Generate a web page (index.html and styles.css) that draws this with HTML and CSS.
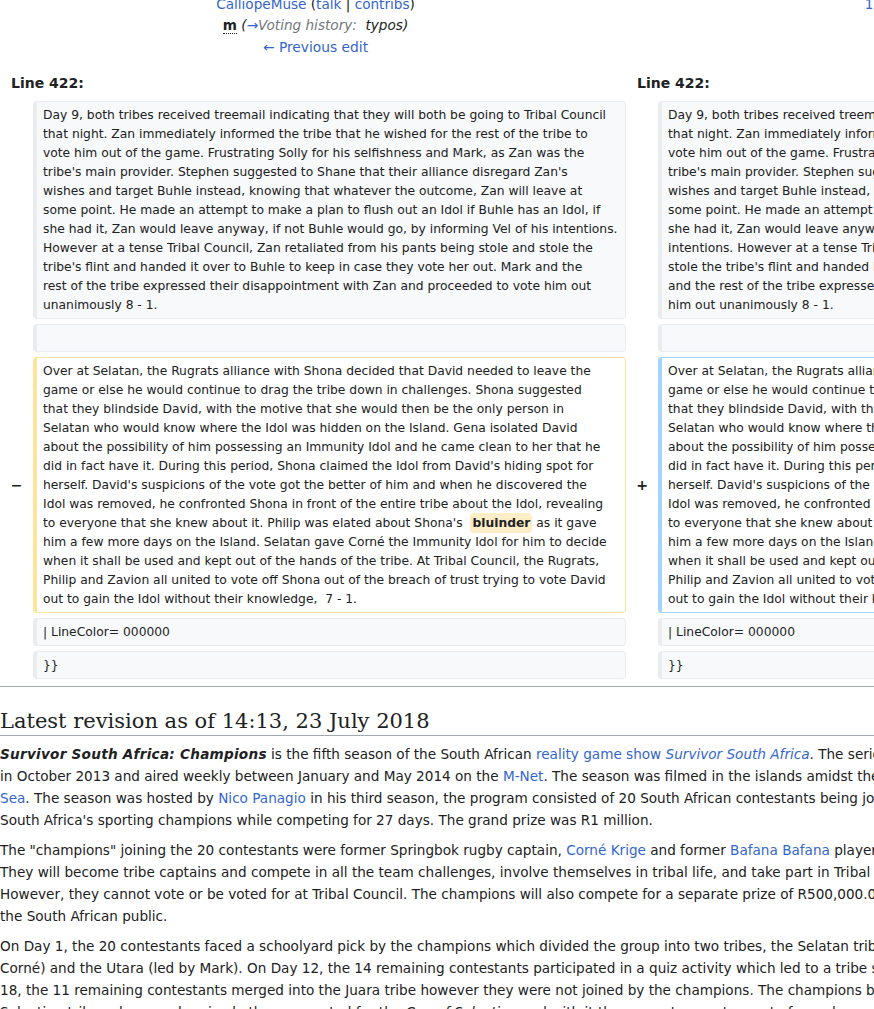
FILE: index.html
```html
<!DOCTYPE html>
<html>
<head>
<meta charset="utf-8">
<title>Survivor South Africa: Champions – Difference between revisions</title>
<link rel="stylesheet" href="styles.css">
</head>
<body>
<div class="page">
  <table class="diff">
    <colgroup>
      <col class="col-marker-l"><col class="col-content-l"><col class="col-marker-r"><col class="col-content-r">
    </colgroup>
    <tr class="diff-title">
      <td colspan="2" class="title-cell">
        <div class="title-line"><a href="#">Revision as of 14:09, 23 July 2018</a> (<a href="#">edit</a>)</div>
        <div class="title-line"><a href="#">CalliopeMuse</a> (<a href="#">talk</a> | <a href="#">contribs</a>)</div>
        <div class="title-line"><abbr class="minor" title="This is a minor edit">m</abbr> <span class="comment">(<span class="autocomment"><a href="#">→</a>Voting history:</span>&nbsp; typos)</span></div>
        <div class="title-line"><a href="#" class="prev">← Previous edit</a></div>
      </td>
      <td colspan="2" class="title-cell">
        <div class="title-line"><a href="#">Latest revision as of 14:13, 23 July 2018</a> (<a href="#">edit</a>) (<a href="#">undo</a>)</div>
        <div class="title-line"><a href="#">197.89.233.214</a> (<a href="#">talk</a>)</div>
      </td>
    </tr>
    <tr>
      <td colspan="2" class="lineno">Line 422:</td>
      <td colspan="2" class="lineno">Line 422:</td>
    </tr>
    <tr>
      <td class="marker"></td>
      <td class="cell ctx">Day 9, both tribes received treemail indicating that they will both be going to Tribal Council
that night. Zan immediately informed the tribe that he wished for the rest of the tribe to
vote him out of the game. Frustrating Solly for his selfishness and Mark, as Zan was the
tribe's main provider. Stephen suggested to Shane that their alliance disregard Zan's
wishes and target Buhle instead, knowing that whatever the outcome, Zan will leave at
some point. He made an attempt to make a plan to flush out an Idol if Buhle has an Idol, if
she had it, Zan would leave anyway, if not Buhle would go, by informing Vel of his intentions.
However at a tense Tribal Council, Zan retaliated from his pants being stole and stole the
tribe's flint and handed it over to Buhle to keep in case they vote her out. Mark and the
rest of the tribe expressed their disappointment with Zan and proceeded to vote him out
unanimously 8 - 1.</td>
      <td class="marker"></td>
      <td class="cell ctx">Day 9, both tribes received treemail indicating that they will both be going to Tribal Council
that night. Zan immediately informed the tribe that he wished for the rest of the tribe to
vote him out of the game. Frustrating Solly for his selfishness and Mark, as Zan was the
tribe's main provider. Stephen suggested to Shane that their alliance disregard Zan's
wishes and target Buhle instead, knowing that whatever the outcome, Zan will leave at
some point. He made an attempt to make a plan to flush out an Idol if Buhle has an Idol, if
she had it, Zan would leave anyway, if not Buhle would go, by informing Vel of his
intentions. However at a tense Tribal Council, Zan retaliated from his pants being stole and
stole the tribe's flint and handed it over to Buhle to keep in case they vote her out. Mark
and the rest of the tribe expressed their disappointment with Zan and proceeded to vote
him out unanimously 8 - 1.</td>
    </tr>
    <tr>
      <td class="marker"></td>
      <td class="cell ctx"><br></td>
      <td class="marker"></td>
      <td class="cell ctx"><br></td>
    </tr>
    <tr>
      <td class="marker">−</td>
      <td class="cell del">Over at Selatan, the Rugrats alliance with Shona decided that David needed to leave the
game or else he would continue to drag the tribe down in challenges. Shona suggested
that they blindside David, with the motive that she would then be the only person in
Selatan who would know where the Idol was hidden on the Island. Gena isolated David
about the possibility of him possessing an Immunity Idol and he came clean to her that he
did in fact have it. During this period, Shona claimed the Idol from David's hiding spot for
herself. David's suspicions of the vote got the better of him and when he discovered the
Idol was removed, he confronted Shona in front of the entire tribe about the Idol, revealing
to everyone that she knew about it. Philip was elated about Shona's <del class="chg">bluinder</del> as it gave
him a few more days on the Island. Selatan gave Corné the Immunity Idol for him to decide
when it shall be used and kept out of the hands of the tribe. At Tribal Council, the Rugrats,
Philip and Zavion all united to vote off Shona out of the breach of trust trying to vote David
out to gain the Idol without their knowledge,  7 - 1.</td>
      <td class="marker">+</td>
      <td class="cell add">Over at Selatan, the Rugrats alliance with Shona decided that David needed to leave the
game or else he would continue to drag the tribe down in challenges. Shona suggested
that they blindside David, with the motive that she would then be the only person in
Selatan who would know where the Idol was hidden on the Island. Gena isolated David
about the possibility of him possessing an Immunity Idol and he came clean to her that he
did in fact have it. During this period, Shona claimed the Idol from David's hiding spot for
herself. David's suspicions of the vote got the better of him and when he discovered the
Idol was removed, he confronted Shona in front of the entire tribe about the Idol, revealing
to everyone that she knew about it. Philip was elated about Shona's <ins class="chg">blunder</ins> as it gave
him a few more days on the Island. Selatan gave Corné the Immunity Idol for him to decide
when it shall be used and kept out of the hands of the tribe. At Tribal Council, the Rugrats,
Philip and Zavion all united to vote off Shona out of the breach of trust trying to vote David
out to gain the Idol without their knowledge,  7 - 1.</td>
    </tr>
    <tr>
      <td class="marker"></td>
      <td class="cell ctx">| LineColor= 000000</td>
      <td class="marker"></td>
      <td class="cell ctx">| LineColor= 000000</td>
    </tr>
    <tr>
      <td class="marker"></td>
      <td class="cell ctx">}}</td>
      <td class="marker"></td>
      <td class="cell ctx">}}</td>
    </tr>
  </table>

  <hr class="diff-hr">
  <h2 class="rev-title">Latest revision as of 14:13, 23 July 2018</h2>

  <div class="article">
    <p><b class="lead"><i>Survivor South Africa: Champions</i></b> is the fifth season of the South African <a href="#">reality game show</a> <a href="#"><i>Survivor South Africa</i></a>. The series was filmed<br>in October 2013 and aired weekly between January and May 2014 on the <a href="#">M-Net</a>. The season was filmed in the islands amidst the <a href="#">South China<br>Sea</a>. The season was hosted by <a href="#">Nico Panagio</a> in his third season, the program consisted of 20 South African contestants being joined by four of<br>South Africa's sporting champions while competing for 27 days. The grand prize was R1 million.</p>
    <p>The "champions" joining the 20 contestants were former Springbok rugby captain, <a href="#">Corné Krige</a> and former <a href="#">Bafana Bafana</a> player, Mark Williams.<br>They will become tribe captains and compete in all the team challenges, involve themselves in tribal life, and take part in Tribal Council.<br>However, they cannot vote or be voted for at Tribal Council. The champions will also compete for a separate prize of R500,000.00 voted by<br>the South African public.</p>
    <p>On Day 1, the 20 contestants faced a schoolyard pick by the champions which divided the group into two tribes, the Selatan tribe (led by<br>Corné) and the Utara (led by Mark). On Day 12, the 14 remaining contestants participated in a quiz activity which led to a tribe swap. On Day<br>18, the 11 remaining contestants merged into the Juara tribe however they were not joined by the champions. The champions became part of the<br>Salvation tribe, where each episode they competed for the <i>Cup of Salvation</i> and with it the power to negate a vote for a player of their choice.</p>
  </div>
</div>
</body>
</html>
```

FILE: styles.css
```css
html, body {
  margin: 0;
  padding: 0;
  background: #ffffff;
}

body {
  overflow: hidden;
  font-family: "DejaVu Sans", sans-serif;
  font-size: 13.6px;
  color: #202122;
}

a {
  color: #3366cc;
  text-decoration: none;
}

.page {
  width: 1252px;
  margin-top: -33px;
}

/* ---------- diff table ---------- */
.diff {
  table-layout: fixed;
  width: 1252px;
  border-collapse: separate;
  border-spacing: 5px;
  font-size: 12.3px;
}

.col-marker-l { width: 23px; }
.col-content-l { width: 593px; }
.col-marker-r { width: 22px; }
.col-content-r { width: 589px; }

.diff td {
  padding: 0;
}

.diff .title-cell {
  font-size: 13.6px;
  line-height: 21.6px;
  text-align: center;
  vertical-align: top;
  padding: 0 0 6px;
}

.prev {
  font-size: 13.8px;
}

.minor {
  font-weight: bold;
  text-decoration: none;
  border-bottom: 1px dotted #202122;
}

.comment {
  font-style: italic;
  color: #202122;
}

.autocomment {
  color: #72777d;
}

.diff .lineno {
  font-size: 14px;
  font-weight: bold;
  line-height: 19px;
  padding: 5px 6px 3px;
  text-align: left;
}

.diff .marker {
  font-size: 14px;
  font-weight: bold;
  text-align: center;
  vertical-align: middle;
}

.diff .cell {
  border-style: solid;
  border-width: 1px 1px 1px 4px;
  border-radius: 4px;
  padding: 3.5px 6px;
  line-height: 19px;
  vertical-align: top;
  white-space: pre;
  overflow: hidden;
}

.diff .ctx {
  background: #f8f9fa;
  border-color: #eaecf0;
}

.diff .del {
  background: #ffffff;
  border-color: #ffe49c;
}

.diff .add {
  background: #ffffff;
  border-color: #a3d3ff;
}

.chg {
  font-weight: bold;
  text-decoration: none;
  border-radius: 0.33em;
  padding: 0.25em 2px;
}

.del .chg {
  background: #feeec8;
  margin-left: 4px;
}

.add .chg {
  background: #d8ecff;
}

/* ---------- current revision ---------- */
.diff-hr {
  height: 1px;
  border: 0;
  background: #a2a9b1;
  margin: 2px 0 0;
}

.rev-title {
  font-family: "DejaVu Serif", serif;
  font-weight: normal;
  font-size: 21px;
  line-height: 28px;
  margin: 20px 0 0;
  padding: 0;
  border-bottom: 1px solid #a2a9b1;
}

.article p {
  margin: 7px 0 8px;
  line-height: 22px;
}

.lead {
  letter-spacing: 0.25px;
}
```
